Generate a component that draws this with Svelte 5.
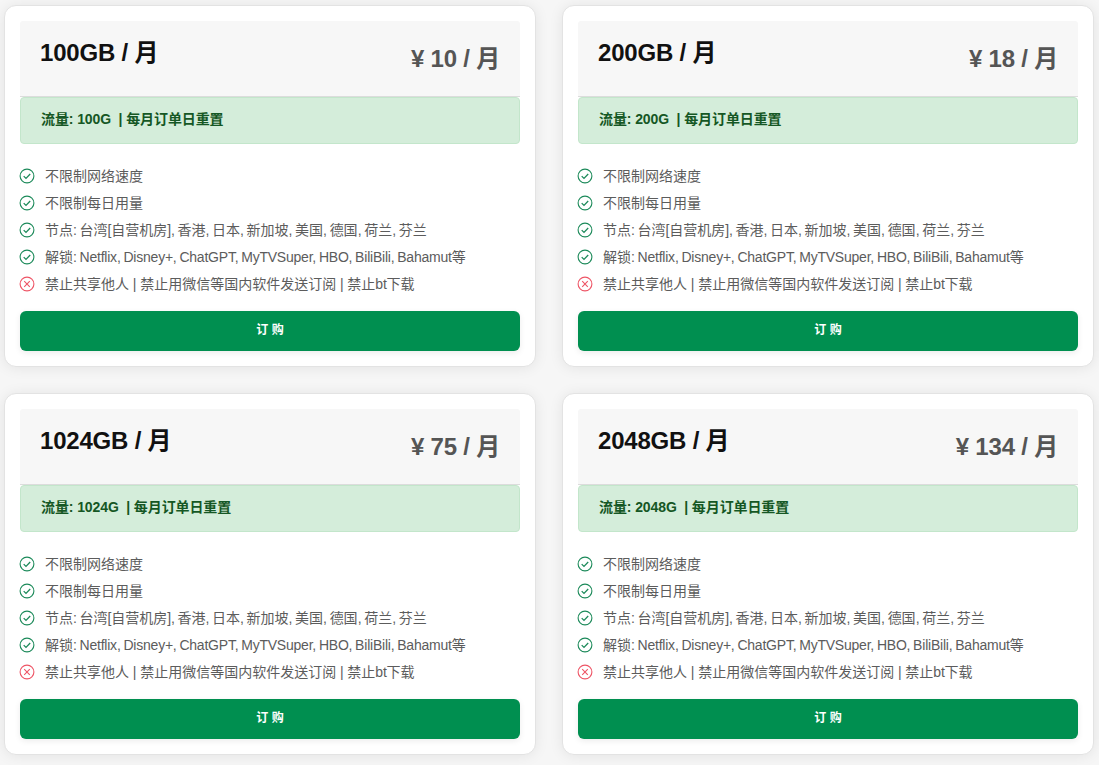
<script>
  // Plans
  const plans = [
    { name: '100GB', traffic: '100G', price: 10 },
    { name: '200GB', traffic: '200G', price: 18 },
    { name: '1024GB', traffic: '1024G', price: 75 },
    { name: '2048GB', traffic: '2048G', price: 134 }
  ];

  const features = [
    { ok: true, text: '不限制网络速度' },
    { ok: true, text: '不限制每日用量' },
    { ok: true, text: '节点: 台湾[自营机房], 香港, 日本, 新加坡, 美国, 德国, 荷兰, 芬兰' },
    { ok: true, text: '解锁: Netflix, Disney+, ChatGPT, MyTVSuper, HBO, BiliBili, Bahamut等' },
    { ok: false, text: '禁止共享他人 | 禁止用微信等国内软件发送订阅 | 禁止bt下载' }
  ];

  // Latin runs sit tighter than the CJK around them
  const runs = (text) => text.split(/([\x00-\x7f]+)/).filter(Boolean);
  const isLatin = (run) => /^[\x00-\x7f]/.test(run);
</script>

<main class="grid">
  {#each plans as plan (plan.name)}
    <section class="card">
      <header class="head">
        <h4 class="title">{plan.name} / 月</h4>
        <div class="price">¥ {plan.price} / 月</div>
      </header>
      <div class="alert">流量: {plan.traffic}&nbsp; | 每月订单日重置</div>
      <ul class="features">
        {#each features as item}
          <li>
            <svg class="icon" class:bad={!item.ok} viewBox="0 0 16 16" width="16" height="16" fill="none" stroke="currentColor">
              <circle cx="8" cy="8" r="6.9" stroke-width="1.1" />
              {#if item.ok}
                <path d="M4.7 8.1l2.3 2.3 4.2-4.4" stroke-width="1.3" />
              {:else}
                <path d="M5.2 5.2l5.6 5.6M10.8 5.2l-5.6 5.6" stroke-width="1.1" />
              {/if}
            </svg>
            <span class="text">{#each runs(item.text) as run}{#if isLatin(run)}<span class="latin" class:sep={run.includes('|')}>{run}</span>{:else}{run}{/if}{/each}</span>
          </li>
        {/each}
      </ul>
      <button class="buy">订 购</button>
    </section>
  {/each}
</main>

<style>
  :global(body) {
    margin: 0;
    background: #f6f6f6;
    font-family: "Liberation Sans", "Noto Sans CJK SC", sans-serif;
  }

  .grid {
    display: grid;
    grid-template-columns: 532px 532px;
    column-gap: 26px;
    row-gap: 26px;
    padding: 5px 5px 10px 4px;
  }

  .card {
    box-sizing: border-box;
    height: 362px;
    padding: 15px;
    background: #fff;
    border: 1px solid #e3e3e3;
    border-radius: 12px;
    box-shadow: 0 1px 14px rgba(0, 0, 0, 0.08);
  }

  .head {
    box-sizing: border-box;
    height: 76px;
    display: flex;
    justify-content: space-between;
    padding: 0 20px;
    background: #f7f7f7;
    border-bottom: 1px solid #dcdcdc;
    border-radius: 3px 3px 0 0;
  }

  .title {
    margin: 16px 0 0;
    font-size: 24px;
    line-height: 32px;
    font-weight: 700;
    letter-spacing: -0.2px;
    color: #111;
  }

  .price {
    margin-top: 22px;
    font-size: 24px;
    line-height: 32px;
    font-weight: 700;
    letter-spacing: -0.2px;
    color: #555;
  }

  .alert {
    box-sizing: border-box;
    height: 47px;
    padding: 0 20px;
    background: #d4edda;
    border: 1px solid #c3e6cb;
    border-radius: 4px;
    font-size: 14px;
    line-height: 43px;
    font-weight: 700;
    letter-spacing: -0.1px;
    color: #155724;
  }

  .features {
    list-style: none;
    margin: 18px 0 14px;
    padding: 0;
  }

  .features li {
    display: flex;
    align-items: center;
    height: 27px;
    font-size: 14px;
    color: #5c5c5c;
    white-space: nowrap;
  }

  .text {
    padding-bottom: 2px;
  }

  .latin {
    letter-spacing: -0.22px;
    word-spacing: -0.8px;
  }

  .latin.sep {
    word-spacing: 0.2px;
  }

  .icon {
    flex: none;
    margin-left: -1px;
    margin-right: 10px;
    color: #1c8a5a;
  }

  .icon.bad {
    color: #ee5566;
  }

  .buy {
    display: block;
    width: 100%;
    height: 40px;
    padding: 0 0 5px;
    background: #008f50;
    border: none;
    border-radius: 6px;
    box-shadow: 0 2px 6px rgba(0, 0, 0, 0.08);
    font-family: inherit;
    font-size: 12px;
    font-weight: 700;
    color: #fff;
  }
</style>
